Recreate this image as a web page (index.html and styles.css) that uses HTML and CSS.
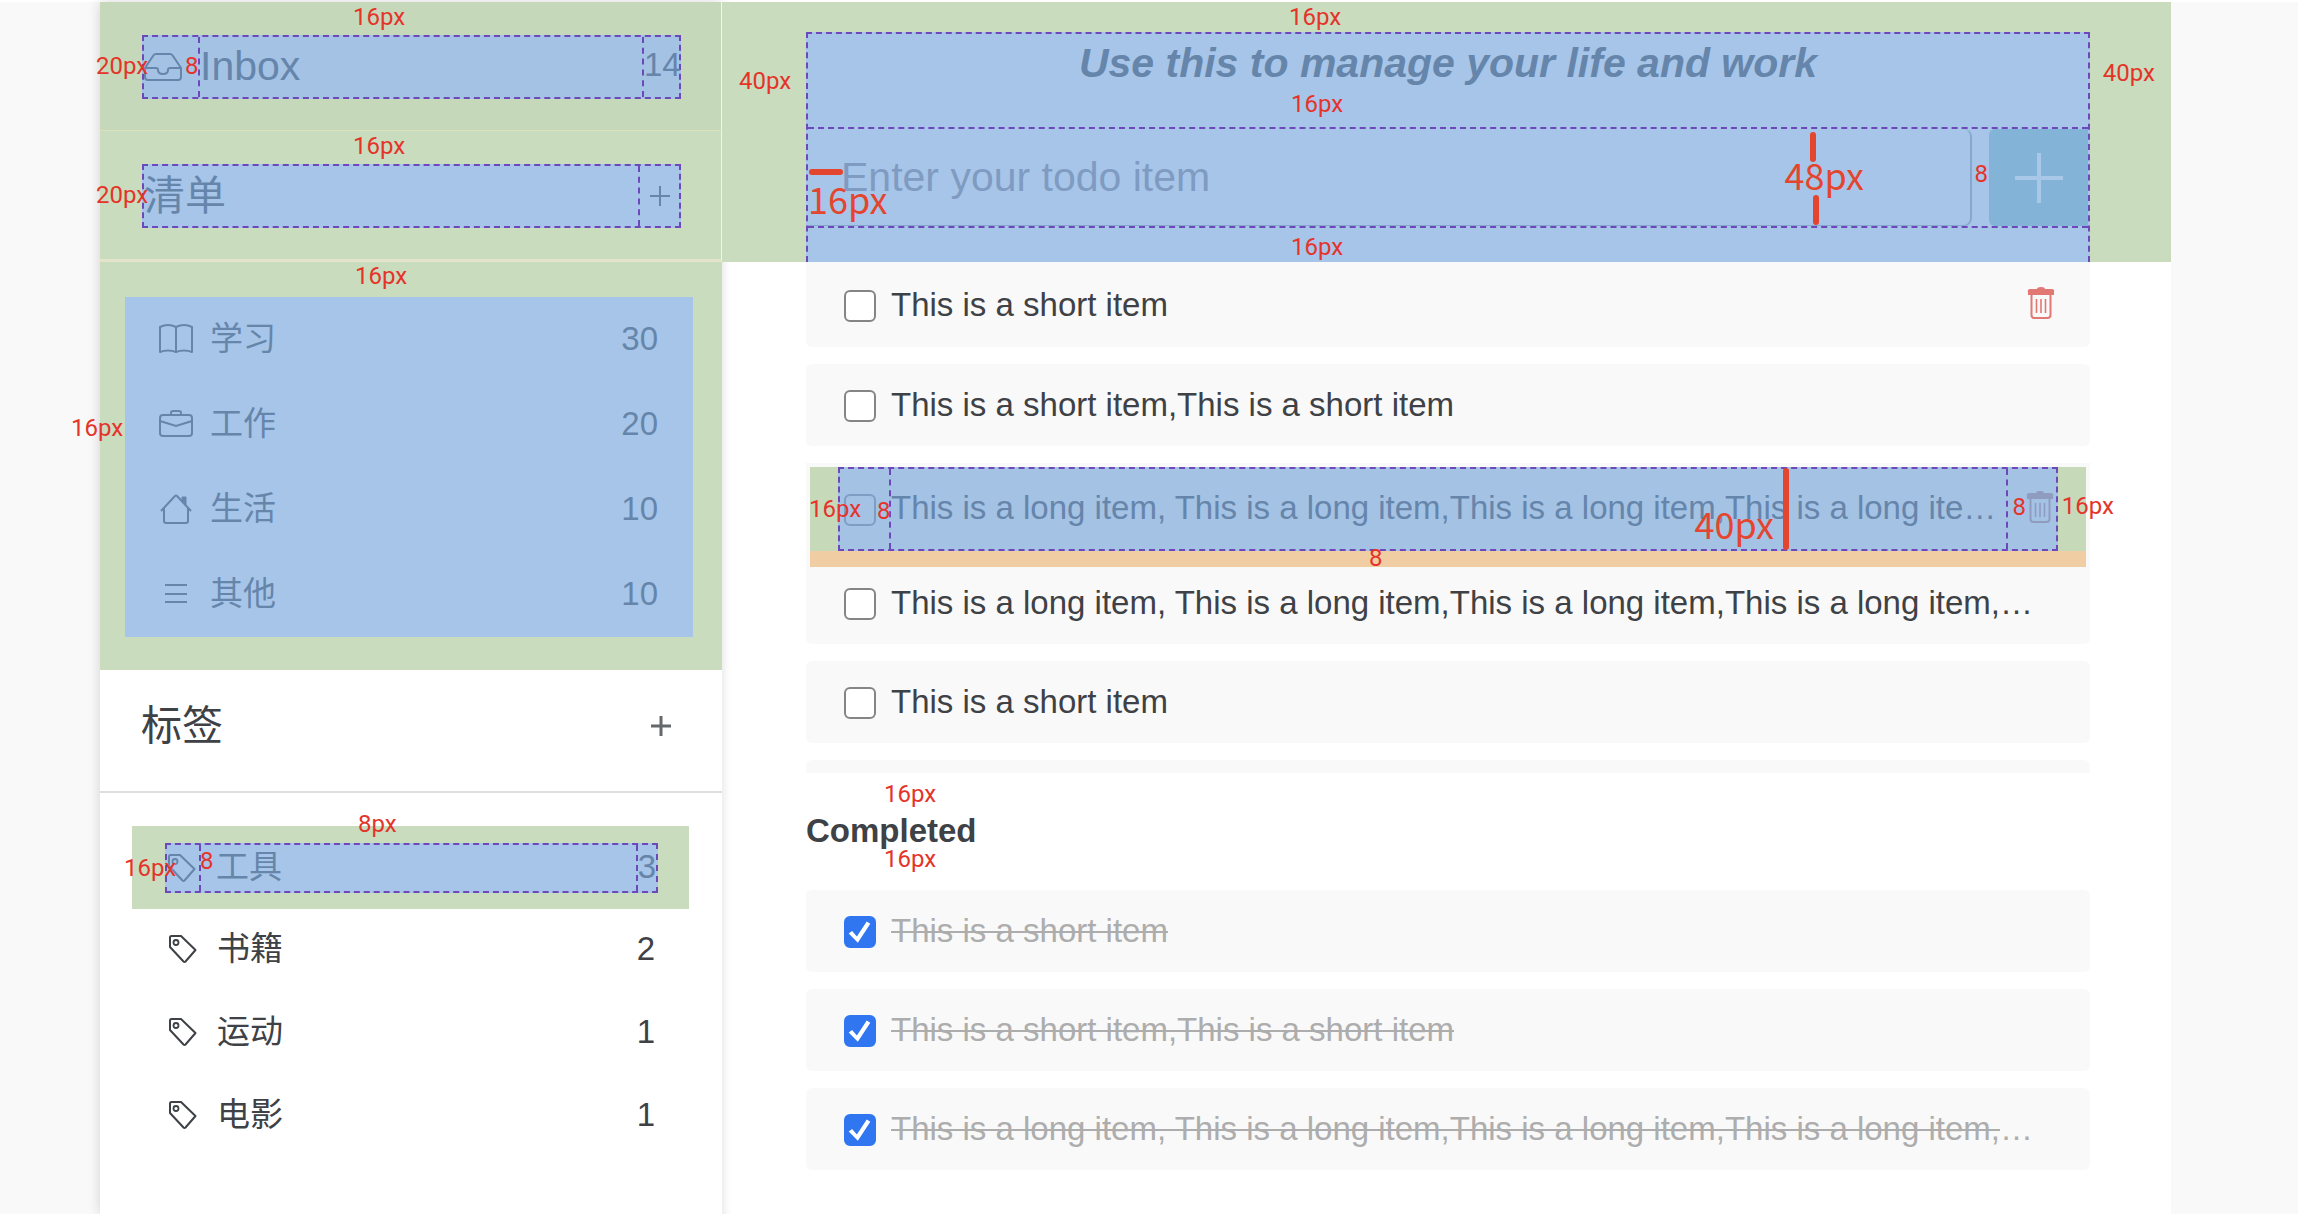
FILE: index.html
```html
<!DOCTYPE html>
<html lang="zh-CN">
<head>
<meta charset="utf-8">
<title>Todo spacing guide</title>
<link rel="stylesheet" href="styles.css">
</head>
<body>
<svg width="0" height="0" class="sprite" aria-hidden="true">
  <symbol id="i-trash" viewBox="0 0 28 32"><path d="M1 5.500Q0 2 3 2h7q0-2 4-2t4 2h7q3 0 2 3.500V8H1z" fill="currentColor"/><path d="M4.500 8v20q0 3 3 3h13q3 0 3-3V8" fill="none" stroke="currentColor" stroke-width="2"/><path d="M9.500 12v14M14 12v14M18.500 12v14" fill="none" stroke="currentColor" stroke-width="1.600"/></symbol>
  <symbol id="i-tag" viewBox="0 0 30 30"><path d="M2 3.500Q2 2 3.500 2H13l14.500 14-10 11.500q-1 1-2 0L2 13z" fill="none" stroke="currentColor" stroke-width="2" stroke-linejoin="round"/><circle cx="8" cy="8.500" r="2.500" fill="none" stroke="currentColor" stroke-width="1.800"/></symbol>
</svg>
<div class="page">
  <aside class="sidebar">
    <section class="bar bar-inbox">
      <div class="guide-row">
        <span class="cell cell-icon"><svg width="38" height="28" viewBox="0 0 38 28" fill="none" stroke="currentColor" stroke-width="2" stroke-linejoin="round"><path d="M1 15 9 3q1-2 3-2h14q2 0 3 2l8 12v9q0 3-3 3H4q-3 0-3-3zM1 15h11q2 0 2 2 0 4 5 4t5-4q0-2 2-2h11"/></svg></span>
        <span class="cell-text">Inbox</span>
        <span class="cell cell-count">14</span>
      </div>
      <span class="note n-top">16px</span><span class="note n-side">20px</span><span class="note n-gap">8</span>
    </section>
    <section class="bar bar-lists">
      <div class="guide-row">
        <h2 class="cell-text">清单</h2>
        <button class="cell cell-add" aria-label="添加清单"><svg width="20" height="20" viewBox="0 0 20 20" stroke="currentColor" stroke-width="2"><path d="M0 10h20M10 0v20"/></svg></button>
      </div>
      <span class="note n-top">16px</span><span class="note n-side">20px</span>
    </section>
    <nav class="lists">
      <ul class="list-box">
        <li><a class="list-link" href="#study"><svg class="ico" viewBox="0 0 34 34" fill="none" stroke="currentColor" stroke-width="2"><path d="M1 5q8-4 16 0 8-4 16 0v25q-8-3-16 0-8-3-16 0zM17 5v25" stroke-linejoin="round"/></svg><span class="name">学习</span><span>30</span></a></li>
        <li><a class="list-link" href="#work"><svg class="ico" viewBox="0 0 34 34" fill="none" stroke="currentColor" stroke-width="2"><rect x="1" y="8" width="32" height="21" rx="3"/><path d="M12 8V6q0-2 2-2h6q2 0 2 2v2M1 14l16 5 16-5"/></svg><span class="name">工作</span><span>20</span></a></li>
        <li><a class="list-link" href="#life"><svg class="ico" viewBox="0 0 34 34" fill="none" stroke="currentColor" stroke-width="2"><path d="M2 19 16 4q1-1 2 0l14 15M5 16v13q0 2 2 2h20q2 0 2-2V16"/><path d="M23 9V5h4v8z" fill="currentColor" stroke-width="1"/></svg><span class="name">生活</span><span>10</span></a></li>
        <li><a class="list-link" href="#other"><svg class="ico" viewBox="0 0 34 34" fill="none" stroke="currentColor" stroke-width="2"><path d="M6 8h22M6 17h22M6 25h22"/></svg><span class="name">其他</span><span>10</span></a></li>
      </ul>
      <span class="note n-top">16px</span><span class="note n-out">16px</span>
    </nav>
    <section class="tags-head">
      <h2 class="cell-text">标签</h2>
      <button class="cell-add plain" aria-label="添加标签"><svg width="20" height="20" viewBox="0 0 20 20" stroke="currentColor" stroke-width="3"><path d="M0 10h20M10 0v20"/></svg></button>
    </section>
    <ul class="tags">
      <li class="tag-measured">
        <a class="tag-guide" href="#tools"><span class="tag-icon"><svg class="tag-svg"><use href="#i-tag"/></svg></span><span class="name">工具</span><span class="tag-count">3</span></a>
        <span class="note n-top">8px</span><span class="note n-side">16px</span><span class="note n-gap">8</span>
      </li>
      <li><a class="tag-link" href="#books"><svg class="tag-svg"><use href="#i-tag"/></svg><span class="name">书籍</span><span>2</span></a></li>
      <li><a class="tag-link" href="#sports"><svg class="tag-svg"><use href="#i-tag"/></svg><span class="name">运动</span><span>1</span></a></li>
      <li><a class="tag-link" href="#movies"><svg class="tag-svg"><use href="#i-tag"/></svg><span class="name">电影</span><span>1</span></a></li>
    </ul>
  </aside>
  <main class="main">
    <header class="head">
      <div class="head-box">
        <h1 class="title">Use this to manage your life and work</h1>
        <form class="add-form">
          <input class="add-input" type="text" placeholder="Enter your todo item" aria-label="Todo item">
          <button class="add-button" type="button" aria-label="Add"><svg width="48" height="50" viewBox="0 0 48 50" stroke="currentColor" stroke-width="4"><path d="M0 25h48M24 0v50"/></svg></button>
        </form>
        <span class="note h-top">16px</span><span class="note h-mid">16px</span><span class="note h-low">16px</span>
        <span class="note h-left">40px</span><span class="note h-right">40px</span><span class="note h-gap">8</span>
        <span class="bar-h mark-pad"></span><span class="note big h-pad">16px</span>
        <span class="bar-v mark-up"></span><span class="note big h-height">48px</span><span class="bar-v mark-down"></span>
      </div>
    </header>
    <ul class="todos">
      <li class="todo first"><input type="checkbox" id="t1"><label for="t1">This is a short item</label><button class="trash" aria-label="Delete"><svg width="28" height="32"><use href="#i-trash"/></svg></button></li>
      <li class="todo"><input type="checkbox" id="t2"><label for="t2">This is a short item,This is a short item</label></li>
      <li class="measured">
        <div class="measured-pad"><div class="measured-box">
          <span class="measured-check"><input type="checkbox" id="t3"></span>
          <label for="t3">This is a long item, This is a long item,This is a long item,This is a long item,This is a long item</label>
          <button class="trash" aria-label="Delete"><svg width="28" height="32"><use href="#i-trash"/></svg></button>
        </div></div>
        <span class="note m-left">16px</span><span class="note m-gap">8</span><span class="note big m-height">40px</span><span class="bar-v mark-item"></span>
        <span class="note m-gap2">8</span><span class="note m-right">16px</span><span class="note m-margin">8</span>
      </li>
      <li class="todo"><input type="checkbox" id="t4"><label for="t4">This is a long item, This is a long item,This is a long item,This is a long item,This is a long item</label></li>
      <li class="todo"><input type="checkbox" id="t5"><label for="t5">This is a short item</label></li>
      <li class="todo"></li>
    </ul>
    <div class="done-head">
      <h2 class="done-title">Completed</h2>
      <span class="note d-top">16px</span><span class="note d-low">16px</span>
    </div>
    <ul class="done">
      <li class="todo"><input type="checkbox" id="d1" checked><label for="d1">This is a short item</label></li>
      <li class="todo"><input type="checkbox" id="d2" checked><label for="d2">This is a short item,This is a short item</label></li>
      <li class="todo"><input type="checkbox" id="d3" checked><label for="d3">This is a long item, This is a long item,This is a long item,This is a long item,This is a long item</label></li>
    </ul>
  </main>
</div>
</body>
</html>
```

FILE: styles.css
```css
:root {
  --pad: #c9dcbd;
  --box: #a7c5e8;
  --ink: #3e4145;
  --blue-ink: #6685ab;
  --dash: #6c48bb;
  --red: #e4342a;
}
* { box-sizing: border-box; }
body {
  margin: 0;
  background: #fff;
  color: var(--ink);
  font-family: "Liberation Sans", "Noto Sans CJK SC", sans-serif;
  font-size: 33px;
  line-height: 40px;
}
h1, h2, ul { margin: 0; padding: 0; font: inherit; }
ul { list-style: none; }
a { color: inherit; text-decoration: none; }
button, input { font: inherit; color: inherit; margin: 0; }
button { border: 0; padding: 0; background: none; }
svg { display: block; flex: none; }
.sprite { position: absolute; }

.page {
  display: flex;
  min-height: calc(100vh - 10px);
  margin-top: 2px;
  padding: 0 127px 0 100px;
  background: #f9f9f9;
}
.sidebar {
  flex: 0 0 622px;
  background: #fff;
  box-shadow: 0 0 12px rgba(0, 0, 0, .16);
}
.main { flex: 1; min-width: 0; background: #fff; box-shadow: inset 10px 0 8px -8px rgba(0, 0, 0, .1); }

/* Sidebar bars */
.bar {
  position: relative;
  padding: 33px 40px 31px 42px;
  color: var(--blue-ink);
  border-right: 1px solid #f1f5ec;
}
.bar-inbox { background: #c5d9ba; border-bottom: 1px solid #dbe1ba; }
.bar-lists { background: var(--pad); border-bottom: 3px solid #e4e4ca; }
.guide-row {
  display: flex;
  height: 64px;
  background: var(--box);
  border: 2px dashed var(--dash);
}
.bar-inbox .guide-row { background: #a3c2e4; }
.cell-text { flex: 1; font-size: 41px; line-height: 60px; }
.bar-inbox .cell-text { line-height: 58px; }
.cell { display: flex; align-items: center; }
.cell-icon { width: 56px; border-right: 2px dashed var(--dash); }
.cell-count { width: 37px; border-left: 2px dashed var(--dash); line-height: 56px; align-items: flex-start; }
.cell-add { width: 41px; justify-content: center; border-left: 2px dashed var(--dash); }

.lists { position: relative; padding: 35px 29px 33px 25px; background: var(--pad); }
.list-box { background: var(--box); color: var(--blue-ink); }
.list-link { display: flex; align-items: center; gap: 17px; height: 85px; padding: 0 35px 2px 34px; }
.name { flex: 1; }
.ico { width: 34px; height: 34px; }

.tags-head { display: flex; padding: 26px 41px 35px; border-bottom: 2px solid #dedede; }
.plain { display: flex; align-items: center; height: 60px; border: 0; color: #66696c; }
.tags { padding-top: 33px; }
.tag-measured { position: relative; margin: 0 33px 0 32px; padding: 17px 31px 16px 33px; background: var(--pad); color: var(--blue-ink); }
.tag-guide { display: flex; height: 50px; line-height: 44px; background: var(--box); border: 2px dashed var(--dash); }
.tag-icon { display: flex; align-items: center; width: 34px; margin-right: 15px; border-right: 2px dashed var(--dash); }
.tag-count { border-left: 2px dashed var(--dash); }
.tag-link { display: flex; align-items: center; gap: 19px; height: 83px; padding: 0 67px 3px 68px; }
.tag-svg { width: 30px; height: 30px; }

/* Header with the entry form */
.head { padding: 30px 81px 0 84px; background: var(--pad); }
.head-box { position: relative; height: 230px; background: var(--box); border: 2px dashed var(--dash); border-bottom: 0; color: var(--blue-ink); }
.title { height: 93px; font-size: 41px; font-style: italic; font-weight: 700; line-height: 58px; text-align: center; }
.add-form { display: flex; gap: 17px; height: 101px; border: dashed var(--dash); border-width: 2px 0; }
.add-input { flex: 1; min-width: 0; padding: 0 33px; font-size: 41px; background: none; border: 0; border-right: 2px solid #86a6cd; border-bottom: 1px solid #86a6cd; border-radius: 0 8px 8px 0; }
.add-input::placeholder { color: #7f9bc1; opacity: 1; }
.add-button { display: flex; align-items: center; justify-content: center; width: 99px; background: #83b3d7; border-radius: 6px 0 0 6px; color: #a9c8e8; }

/* Todo items */
.todos, .done { display: flex; flex-direction: column; gap: 17px; margin: 0 81px 0 84px; }
.todos { height: 511px; overflow: hidden; }
.todo { display: flex; flex: none; align-items: center; height: 82px; padding: 0 51px 0 38px; background: #f9f9f9; border-radius: 6px; }
.todo.first { height: 85px; padding-right: 35px; border-radius: 0 0 6px 6px; }
.todos label, .done label { flex: 1; min-width: 0; overflow: hidden; white-space: nowrap; text-overflow: ellipsis; }
.done label { color: #adadad; text-decoration: line-through; text-decoration-thickness: 2px; }
input[type="checkbox"] {
  flex: none;
  width: 32px;
  height: 32px;
  margin: 2px 15px 0 0;
  appearance: none;
  background: #fff;
  border: 2px solid #858585;
  border-radius: 6px;
}
input[type="checkbox"]:checked { display: grid; place-items: center; background: #2f76f0; border-color: #2f76f0; }
input[type="checkbox"]:checked::before {
  content: "";
  width: 24px;
  height: 24px;
  background: #fff;
  clip-path: polygon(3% 56%, 17% 46%, 37% 69%, 78% 6%, 93% 16%, 41% 95%);
}
.trash { margin-left: 8px; color: #e27874; }
.first .trash { padding-bottom: 3px; }

.measured { position: relative; z-index: 1; flex: none; margin-bottom: -22px; padding: 4px 4px 0; background: #f9f9f9; }
.measured-pad { padding: 0 28px; background: #c6dab9; border-bottom: 16px solid #f0cda3; }
.measured-box { display: flex; align-items: center; height: 84px; background: #a4c2e4; border: 2px dashed var(--dash); color: var(--blue-ink); }
.measured-check { display: flex; align-items: center; width: 51px; height: 80px; padding-left: 4px; border-right: 2px dashed var(--dash); }
.measured input[type="checkbox"] { background: none; border-color: #7f9cc3; }
.measured-box label { padding-bottom: 2px; }
.measured-box .trash { display: flex; align-items: center; justify-content: flex-end; width: 50px; height: 80px; margin: 0; padding: 0 2px 4px 0; border-left: 2px dashed var(--dash); color: #8f9cc0; }

.done-head { position: relative; margin: 0 81px 0 84px; padding: 38px 0 39px; }
.done-title { font-weight: 700; }

/* Spacing notes laid over the interface */
.note { position: absolute; color: var(--red); font: 24px/24px Roboto, sans-serif; white-space: nowrap; }
.big { color: #e3452f; font: 36px/36px "Noto Sans CJK SC", sans-serif; }
.bar-v, .bar-h { position: absolute; background: #e3452f; border-radius: 3px; }
.bar-v { width: 6px; height: 30px; }
.bar-h { width: 34px; height: 6px; }

.bar .n-top { left: 253px; top: 3px; }
.bar .n-side { left: -4px; top: 52px; }
.bar .n-gap { left: 85px; top: 52px; }
.lists .n-top { left: 255px; top: 2px; }
.lists .n-out { left: -29px; top: 154px; }
.tag-measured .n-top { left: 226px; top: -14px; }
.tag-measured .n-side { left: -8px; top: 30px; }
.tag-measured .n-gap { left: 68px; top: 23px; }

.h-top { left: 481px; top: -29px; }
.h-mid { left: 483px; top: 58px; }
.h-low { left: 483px; top: 201px; }
.h-left { left: -69px; top: 35px; }
.h-right { right: -67px; top: 27px; }
.h-gap { right: 100px; top: 128px; }
.mark-pad { left: 1px; top: 135px; }
.h-pad { left: 0; top: 146px; }
.mark-up { right: 272px; top: 98px; }
.h-height { right: 224px; top: 122px; }
.mark-down { right: 269px; top: 161px; }

.m-left { left: 3px; top: 34px; }
.m-gap { left: 71px; top: 36px; }
.m-height { right: 316px; top: 42px; }
.mark-item { right: 301px; top: 5px; height: 82px; }
.m-gap2 { right: 64px; top: 32px; }
.m-right { right: -24px; top: 31px; }
.m-margin { left: 563px; top: 83px; }
/* Room for the right-hand note, which reaches past the items */
.todos { margin-right: 51px; padding-right: 30px; }

.d-top { left: 78px; top: 9px; }
.d-low { left: 78px; top: 74px; }
```
